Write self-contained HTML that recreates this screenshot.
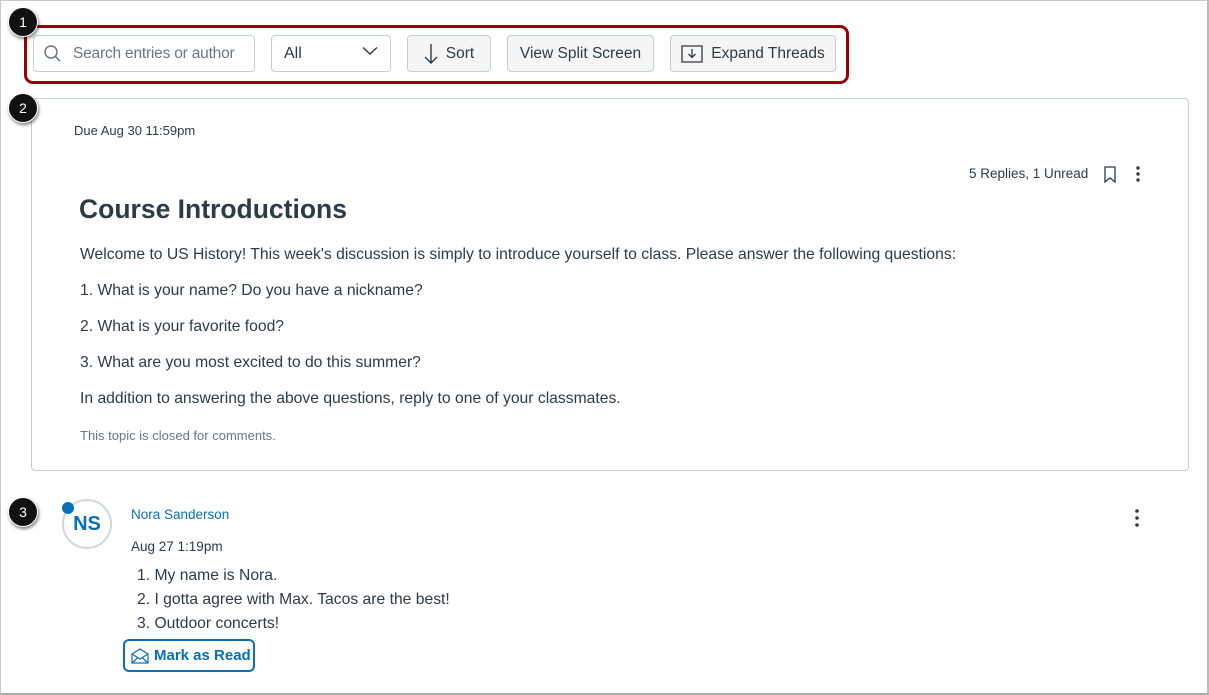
<!DOCTYPE html>
<html><head><style>
*{box-sizing:border-box;margin:0;padding:0}
body{width:1209px;height:695px;background:#fff;font-family:"Liberation Sans",sans-serif;color:#2d3b45;position:relative;overflow:hidden}
.frame{position:absolute;left:0;top:0;width:1209px;height:695px;border:1px solid #c9c9c9;border-right:2px solid #bbb;border-bottom:2px solid #aaa}
.abs{position:absolute;white-space:nowrap}
.badge{position:absolute;width:30px;height:30px;border-radius:50%;background:#111;color:#fff;font-size:14px;text-align:center;line-height:29px;box-shadow:1px 2px 3px rgba(0,0,0,.5);border:1px solid #fff}
.btn{position:absolute;top:35px;height:37px;background:#f5f5f5;border:1px solid #c7cdd1;border-radius:4px;font-size:15.5px;color:#2d3b45;display:flex;align-items:center;justify-content:center;gap:8px;white-space:nowrap}
.p{position:absolute;left:80px;font-size:15.7px;color:#2d3b45;white-space:nowrap}
</style></head><body>
<div class="frame"></div>
<div class="abs" style="left:24px;top:25px;width:825px;height:59px;border:3px solid #990000;border-radius:9px"></div>
<div class="abs" style="left:33px;top:35px;width:222px;height:37px;border:1px solid #c7cdd1;border-radius:4px;background:#fff"></div>
<svg class="abs" style="left:43px;top:44px" width="20" height="20" viewBox="0 0 20 20"><circle cx="8" cy="8" r="6" fill="none" stroke="#6b7780" stroke-width="1.5"/><path d="M12.5 12.5L17 17" stroke="#6b7780" stroke-width="1.5"/></svg>
<div class="abs" style="left:73px;top:45px;font-size:15.5px;color:#6b7780;letter-spacing:-0.2px">Search entries or author</div>
<div class="abs" style="left:271px;top:35px;width:120px;height:37px;border:1px solid #c7cdd1;border-radius:4px;background:#fff"></div>
<div class="abs" style="left:284px;top:45px;font-size:16px">All</div>
<svg class="abs" style="left:362px;top:46px" width="16" height="10" viewBox="0 0 16 10"><path d="M1 1.5L8 8L15 1.5" fill="none" stroke="#2d3b45" stroke-width="1.4"/></svg>
<div class="btn" style="left:407px;width:84px"><svg width="14" height="22" viewBox="0 0 14 22"><path d="M7 1V20M1 14L7 20L13 14" fill="none" stroke="#2d3b45" stroke-width="1.4"/></svg>Sort</div>
<div class="btn" style="left:507px;width:147px">View Split Screen</div>
<div class="btn" style="left:670px;width:166px"><svg width="22" height="18" viewBox="0 0 22 18"><path d="M1 1H21V17H1Z" fill="none" stroke="#2d3b45" stroke-width="1.3"/><path d="M11 4V12M7.5 9L11 12.5L14.5 9" fill="none" stroke="#2d3b45" stroke-width="1.3"/></svg>Expand Threads</div>

<div class="abs" style="left:31px;top:98px;width:1158px;height:373px;border:1px solid #c7cdd1;border-radius:4px"></div>
<div class="abs" style="left:74px;top:123px;font-size:13px">Due Aug 30 11:59pm</div>
<div class="abs" style="left:969px;top:166px;font-size:13.5px">5 Replies, 1 Unread</div>
<svg class="abs" style="left:1103px;top:166px" width="14" height="17" viewBox="0 0 14 17"><path d="M2 1H12V16L7 12L2 16Z" fill="none" stroke="#2d3b45" stroke-width="1.3"/></svg>
<svg class="abs" style="left:1134px;top:166px" width="8" height="16"><circle cx="4" cy="2" r="1.7" fill="#2d3b45"/><circle cx="4" cy="8" r="1.7" fill="#2d3b45"/><circle cx="4" cy="14" r="1.7" fill="#2d3b45"/></svg>
<div class="abs" style="left:79px;top:194px;font-size:26.5px;font-weight:bold">Course Introductions</div>
<div class="p" style="top:246px">Welcome to US History! This week's discussion is simply to introduce yourself to class. Please answer the following questions:</div>
<div class="p" style="top:282px">1. What is your name? Do you have a nickname?</div>
<div class="p" style="top:318px">2. What is your favorite food?</div>
<div class="p" style="top:354px">3. What are you most excited to do this summer?</div>
<div class="p" style="top:390px">In addition to answering the above questions, reply to one of your classmates.</div>
<div class="abs" style="left:80px;top:428px;font-size:13px;color:#6b7780">This topic is closed for comments.</div>

<div class="abs" style="left:62px;top:499px;width:50px;height:50px;border:2px solid #d0d6da;border-radius:50%;color:#0770b8;font-weight:bold;font-size:20px;text-align:center;line-height:46px">NS</div>
<div class="abs" style="left:62px;top:502px;width:12px;height:12px;border-radius:50%;background:#0770b8"></div>
<div class="abs" style="left:131px;top:507px;font-size:13.5px;color:#0770b8">Nora Sanderson</div>
<div class="abs" style="left:131px;top:539px;font-size:13.5px">Aug 27 1:19pm</div>
<div class="abs" style="left:137px;top:564px;font-size:15.7px;line-height:24px">1. My name is Nora.<br>2. I gotta agree with Max. Tacos are the best!<br>3. Outdoor concerts!</div>
<div class="abs" style="left:123px;top:639px;width:132px;height:33px;border:2px solid #0770b8;border-radius:6px;color:#0770b8;font-weight:bold;font-size:15px;display:flex;align-items:center;padding-left:6px;gap:5px"><svg width="18" height="16" viewBox="0 0 18 16"><path d="M1 6L9 1L17 6V15H1Z M1 6L9 11L17 6 M1 15L7 9.5 M17 15L11 9.5" fill="none" stroke="#0770b8" stroke-width="1.2"/></svg>Mark as Read</div>
<svg class="abs" style="left:1133px;top:509px" width="8" height="18"><circle cx="4" cy="2" r="1.8" fill="#2d3b45"/><circle cx="4" cy="9" r="1.8" fill="#2d3b45"/><circle cx="4" cy="16" r="1.8" fill="#2d3b45"/></svg>

<div class="badge" style="left:8px;top:7px">1</div>
<div class="badge" style="left:8px;top:93px">2</div>
<div class="badge" style="left:8px;top:497px">3</div>
</body></html>
